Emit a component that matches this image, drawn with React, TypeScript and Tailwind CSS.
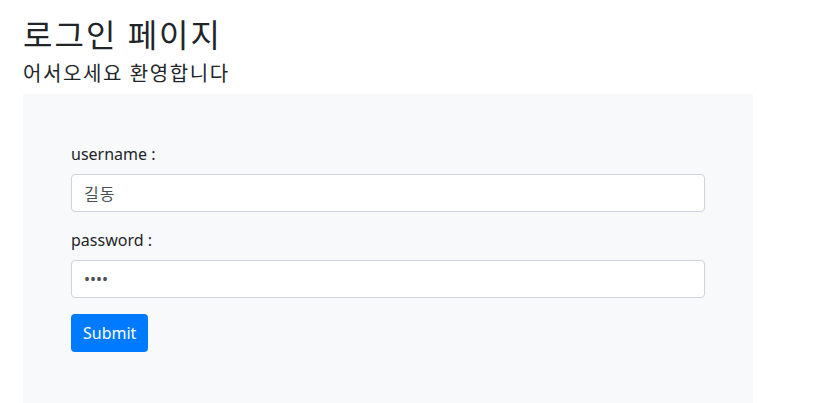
import React from 'react';

export default function App() {
  return (
    <div
      className="min-h-[403px] bg-white pt-4 pl-[23px] text-[#212529]"
      style={{ fontFamily: '"Noto Sans", "Noto Sans CJK KR", sans-serif' }}
    >
      <h2 className="mb-2 text-[32px] font-normal leading-[1.2] tracking-[2px]">로그인 페이지</h2>
      <h5 className="mb-2 text-[20px] font-normal leading-[1.2] tracking-[1.6px]">어서오세요 환영합니다</h5>

      <div className="w-[730px] bg-[#f8f9fa] p-12 pb-16">
        <form onSubmit={(e) => e.preventDefault()}>
          <div className="mb-4">
            <label className="mb-2 block text-base leading-6">username :</label>
            <input
              type="text"
              defaultValue="길동"
              className="block h-[38px] w-full rounded border border-[#ced4da] bg-white px-3 text-base tracking-[1px] text-[#495057] outline-none"
            />
          </div>
          <div className="mb-4">
            <label className="mb-2 block text-base leading-6">password :</label>
            <input
              type="password"
              defaultValue="1234"
              className="block h-[38px] w-full rounded border border-[#ced4da] bg-white px-3 text-base text-[#495057] outline-none"
            />
          </div>
          <button
            type="submit"
            className="h-[38px] rounded bg-[#007bff] px-3 text-base leading-6 text-white"
          >
            Submit
          </button>
        </form>
      </div>
    </div>
  );
}
